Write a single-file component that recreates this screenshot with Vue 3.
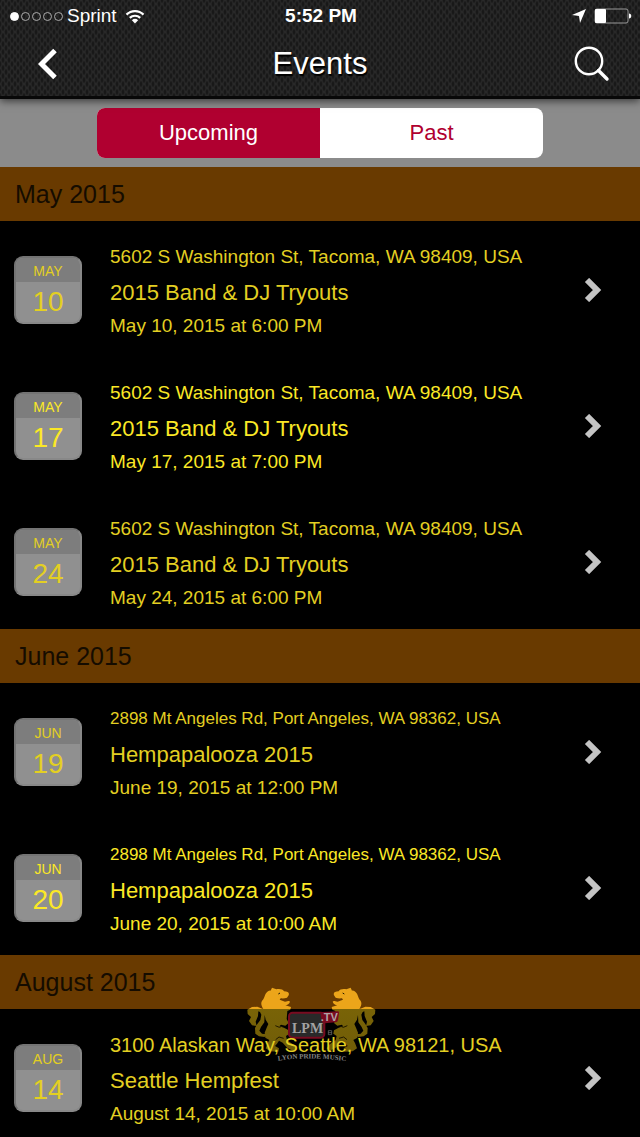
<template>
  <div class="app">
    <header class="top">
      <div class="status">
        <div class="status-left">
          <span class="signal">
            <i v-for="n in 5" :key="n" class="dot" :class="{ full: n === 1 }"></i>
          </span>
          <span>Sprint</span>
          <svg class="wifi" viewBox="0 0 20 15" aria-hidden="true">
            <path d="M1.5 5.6a12 12 0 0 1 17 0" />
            <path d="M4.8 8.9a7.4 7.4 0 0 1 10.4 0" />
            <path class="solid" d="M6.9 11.2a4.5 4.5 0 0 1 6.2 0L10 14.4z" />
          </svg>
        </div>
        <div class="status-time">5:52 PM</div>
        <div class="status-right">
          <svg class="location" viewBox="0 0 14 14" aria-hidden="true">
            <path d="M14 0 8 14 7 7 0 6z" />
          </svg>
          <svg class="battery" viewBox="0 0 38 16" aria-hidden="true">
            <rect class="shell" x="1" y="1" width="33" height="14" rx="2" />
            <rect class="level" x="1" y="1" width="11" height="14" rx="1" />
            <path class="level" d="M35 5.5c3 0 3 5 0 5z" />
          </svg>
        </div>
      </div>
      <nav class="navbar">
        <button class="icon-btn" type="button" aria-label="Back">
          <svg class="back" viewBox="0 0 20 32" aria-hidden="true">
            <path d="M17 2.5 3.5 16 17 29.5" />
          </svg>
        </button>
        <h1>Events</h1>
        <button class="icon-btn" type="button" aria-label="Search">
          <svg class="search" viewBox="0 0 36 36" aria-hidden="true">
            <circle cx="15" cy="15" r="13.2" />
            <path class="handle" d="m24.5 24.5 8.5 8.5" />
          </svg>
        </button>
      </nav>
    </header>

    <div class="tabs">
      <div class="segmented">
        <button
          v-for="tab in tabs"
          :key="tab"
          type="button"
          :class="{ active: tab === activeTab }"
          @click="activeTab = tab"
        >
          {{ tab }}
        </button>
      </div>
    </div>

    <main class="list">
      <section v-for="group in groups" :key="group.title">
        <h2>{{ group.title }}</h2>
        <a
          v-for="(event, i) in group.events"
          :key="event.date"
          class="event"
          :class="{ bright: i % 2 === 1 }"
          href="#"
        >
          <span class="calendar">
            <span class="calendar-month">{{ event.month }}</span>
            <span class="calendar-day">{{ event.day }}</span>
          </span>
          <span class="info">
            <span class="address" :class="group.fit">{{ event.address }}</span>
            <span class="name">{{ event.name }}</span>
            <span class="date">{{ event.date }}</span>
          </span>
          <svg class="chevron" viewBox="0 0 18 24" aria-hidden="true">
            <path d="M3 2 13 12 3 22" />
          </svg>
        </a>
      </section>
    </main>

    <!-- Floating band logo -->
    <svg class="logo" viewBox="0 0 480 285" aria-hidden="true">
      <defs>
        <linearGradient id="gold" gradientUnits="userSpaceOnUse" x1="0" y1="0" x2="0" y2="285">
          <stop offset="0" stop-color="#eca51a" />
          <stop offset="0.355" stop-color="#eca51a" />
          <stop offset="0.355" stop-color="#796307" />
          <stop offset="1" stop-color="#6d5b08" />
        </linearGradient>
        <path
          id="lion"
          d="M100 102C92 90 92 80 99 74C103 68 104 62 107 56C113 48 118 46 122 47L126 38L139 43C149 41 159 43 162 49C173 49 179 53 176 61L171 68C165 70 160 71 152 70L149 74L165 80C173 80 177 76 180 80C178 87 172 90 166 91L183 96L181 104L172 108L170 132L176 144L166 152L153 149L148 154L162 158L176 166L178 176L168 183L171 196L188 207L198 220L190 228L172 219L158 203L147 197L141 206L135 213L147 220L145 230L120 229L107 220L113 204L118 195L106 188L104 173L110 158L115 147L107 134L104 120L103 142L93 156L88 167L96 176L108 178L104 186L87 184L76 176L75 159L82 147L91 135L94 119L90 111L85 109L84 123L77 140L80 153L66 151L57 138L63 126L53 117L52 104L66 96L82 95L93 100Z"
        />
      </defs>
      <use href="#lion" fill="url(#gold)" />
      <use href="#lion" fill="url(#gold)" transform="translate(488 0) scale(-1 1)" />
      <g class="folds">
        <path d="M145 57l5-3M136 152l12 5 10-4M137 194l10-8 14 4" />
        <path d="m343 57-5-3M352 152l-12 5-10-4M351 194l-10-8-14 4" />
      </g>
      <rect class="screen" x="177" y="113" width="106" height="75" rx="11" />
      <path class="tag" d="m278 111 45-2q5 0 4 6l-3 20q-1 7-8 7l-31 3q-6 1-9-4l-4-21q-1-7 6-9z" />
      <text class="lpm" x="186" y="174">LPM</text>
      <text class="tv" x="272" y="139">.TV</text>
      <path class="mark" d="M295 167h10v12h-10zm0 6h10" />
      <path id="arc" d="M144 257Q244 243 350 259" />
      <text class="motto"><textPath href="#arc">LYON PRIDE MUSIC</textPath></text>
    </svg>
  </div>
</template>

<script setup>
import { ref } from 'vue'

const tabs = ['Upcoming', 'Past']
const activeTab = ref('Upcoming')

const tacoma = '5602 S Washington St, Tacoma, WA 98409, USA'
const portAngeles = '2898 Mt Angeles Rd, Port Angeles, WA 98362, USA'
const seattle = '3100 Alaskan Way, Seattle, WA 98121, USA'
const tryouts = '2015 Band & DJ Tryouts'
const hempapalooza = 'Hempapalooza 2015'

const groups = [
  {
    title: 'May 2015',
    fit: 'medium',
    events: [
      { month: 'MAY', day: 10, address: tacoma, name: tryouts, date: 'May 10, 2015 at 6:00 PM' },
      { month: 'MAY', day: 17, address: tacoma, name: tryouts, date: 'May 17, 2015 at 7:00 PM' },
      { month: 'MAY', day: 24, address: tacoma, name: tryouts, date: 'May 24, 2015 at 6:00 PM' },
    ],
  },
  {
    title: 'June 2015',
    fit: 'small',
    events: [
      { month: 'JUN', day: 19, address: portAngeles, name: hempapalooza, date: 'June 19, 2015 at 12:00 PM' },
      { month: 'JUN', day: 20, address: portAngeles, name: hempapalooza, date: 'June 20, 2015 at 10:00 AM' },
    ],
  },
  {
    title: 'August 2015',
    fit: 'large',
    events: [
      { month: 'AUG', day: 14, address: seattle, name: 'Seattle Hempfest', date: 'August 14, 2015 at 10:00 AM' },
    ],
  },
]
</script>

<style>
body {
  background: #000;
}
</style>

<style scoped>
.app {
  position: relative;
  display: flex;
  flex-direction: column;
  height: 100vh;
  overflow: hidden;
  background: #000;
  font-family: 'Liberation Sans', Arial, sans-serif;
}

button {
  padding: 0;
  border: 0;
  background: none;
  font-family: inherit;
  cursor: pointer;
}

svg {
  display: block;
  fill: none;
}

/* Header */
.top {
  position: relative;
  z-index: 1;
  flex: none;
  color: #fff;
  background-color: #2b2b2b;
  background-image: radial-gradient(ellipse 2px 4px, #181818 40%, transparent),
    radial-gradient(ellipse 2px 4px, #181818 40%, transparent);
  background-size: 6px 8px;
  background-position: 0 0, 3px 4px;
  border-bottom: 3px solid #080808;
  box-shadow: 0 2px 8px rgba(0, 0, 0, 0.6);
}

.status {
  display: grid;
  grid-template-columns: 1fr auto 1fr;
  align-items: center;
  height: 32px;
  padding: 0 8px 0 10px;
  font-size: 19px;
}

.status-left,
.status-right,
.signal {
  display: flex;
  align-items: center;
}

.status-left {
  gap: 4px;
}

.signal {
  gap: 2px;
}

.dot {
  box-sizing: border-box;
  width: 9px;
  height: 9px;
  border: 1px solid #aaa;
  border-radius: 50%;
}

.dot.full {
  border-color: #fff;
  background: #fff;
}

.wifi {
  width: 20px;
  height: 15px;
  margin-left: 4px;
  stroke: #fff;
  stroke-width: 2.2;
}

.wifi .solid {
  fill: #fff;
  stroke: none;
}

.status-time {
  font-weight: bold;
}

.status-right {
  justify-content: flex-end;
  gap: 8px;
}

.location {
  width: 14px;
  height: 14px;
  fill: #fff;
}

.battery {
  width: 38px;
  height: 16px;
}

.shell {
  stroke: #999;
}

.level {
  fill: #fff;
}

.navbar {
  display: flex;
  align-items: center;
  justify-content: space-between;
  height: 64px;
  padding: 0 24px;
}

.icon-btn {
  display: flex;
  align-items: center;
  justify-content: center;
  width: 48px;
  height: 48px;
}

.back {
  width: 20px;
  height: 32px;
  stroke: #fff;
  stroke-width: 5;
}

.search {
  width: 36px;
  height: 36px;
  stroke: #fff;
  stroke-width: 2.4;
}

.search .handle {
  stroke-width: 3.4;
  stroke-linecap: round;
}

h1 {
  margin: 0;
  font-size: 31px;
  font-weight: normal;
  line-height: 36px;
  text-shadow: 1px 2px 1px #000;
}

/* Upcoming / past switch */
.tabs {
  flex: none;
  display: flex;
  justify-content: center;
  padding: 9px 0;
  background: #8b8b8b;
}

.segmented {
  display: flex;
  width: 70%;
  max-width: 446px;
  height: 50px;
  overflow: hidden;
  border-radius: 8px;
  background: #fff;
}

.segmented button {
  flex: 1;
  color: #b00030;
  font-size: 22px;
}

.segmented .active {
  color: #fff;
  background: #b00030;
}

/* Event list */
.list {
  flex: 1;
  min-height: 0;
  overflow-y: auto;
  scrollbar-width: none;
}

h2 {
  margin: 0;
  padding: 0 15px;
  color: #150c00;
  background: #693a00;
  font-size: 25px;
  font-weight: normal;
  line-height: 54px;
}

.event {
  box-sizing: border-box;
  display: flex;
  align-items: center;
  height: 136px;
  padding: 2px 38px 0 14px;
  color: #e3cf22;
  text-decoration: none;
}

.event.bright {
  color: #fbe826;
}

.calendar {
  box-sizing: border-box;
  flex: none;
  display: flex;
  flex-direction: column;
  width: 68px;
  height: 68px;
  margin-right: 28px;
  overflow: hidden;
  border: 2px solid #737373;
  border-right-color: #888;
  border-bottom-color: #888;
  border-radius: 9px;
  background: #909090;
  text-align: center;
}

.calendar-month {
  padding-top: 2px;
  background: #7d7d7d;
  font-size: 14px;
  line-height: 22px;
}

.calendar-day {
  font-size: 28px;
  line-height: 40px;
}

.info {
  position: relative;
  z-index: 2;
  flex: 1;
  display: flex;
  flex-direction: column;
  white-space: nowrap;
}

.address,
.name {
  line-height: 36px;
}

.address.small {
  font-size: 17px;
}

.address.medium {
  font-size: 19px;
}

.address.large {
  font-size: 20px;
}

.name {
  font-size: 22px;
}

.date {
  font-size: 19px;
  line-height: 30px;
}

.chevron {
  width: 18px;
  height: 24px;
  stroke: #c4c4c4;
  stroke-width: 6;
}

/* Logo hovers over the list, under the event text */
.logo {
  position: absolute;
  z-index: 1;
  bottom: 67px;
  left: calc(50% - 90px);
  width: 160px;
  height: 95px;
  pointer-events: none;
}

.folds {
  stroke: #201800;
  stroke-width: 3;
}

.screen {
  fill: #292929;
  stroke: #780b20;
  stroke-width: 6;
}

.tag {
  fill: #780b20;
}

.lpm {
  fill: #a2a2a2;
  font: bold 42px 'Liberation Serif', serif;
}

.tv {
  fill: #b1a4a6;
  font: bold 33px 'Liberation Sans', sans-serif;
}

.mark {
  stroke: #777;
  stroke-width: 2;
}

.motto {
  fill: #858585;
  font: bold 21px 'Liberation Serif', serif;
}
</style>
